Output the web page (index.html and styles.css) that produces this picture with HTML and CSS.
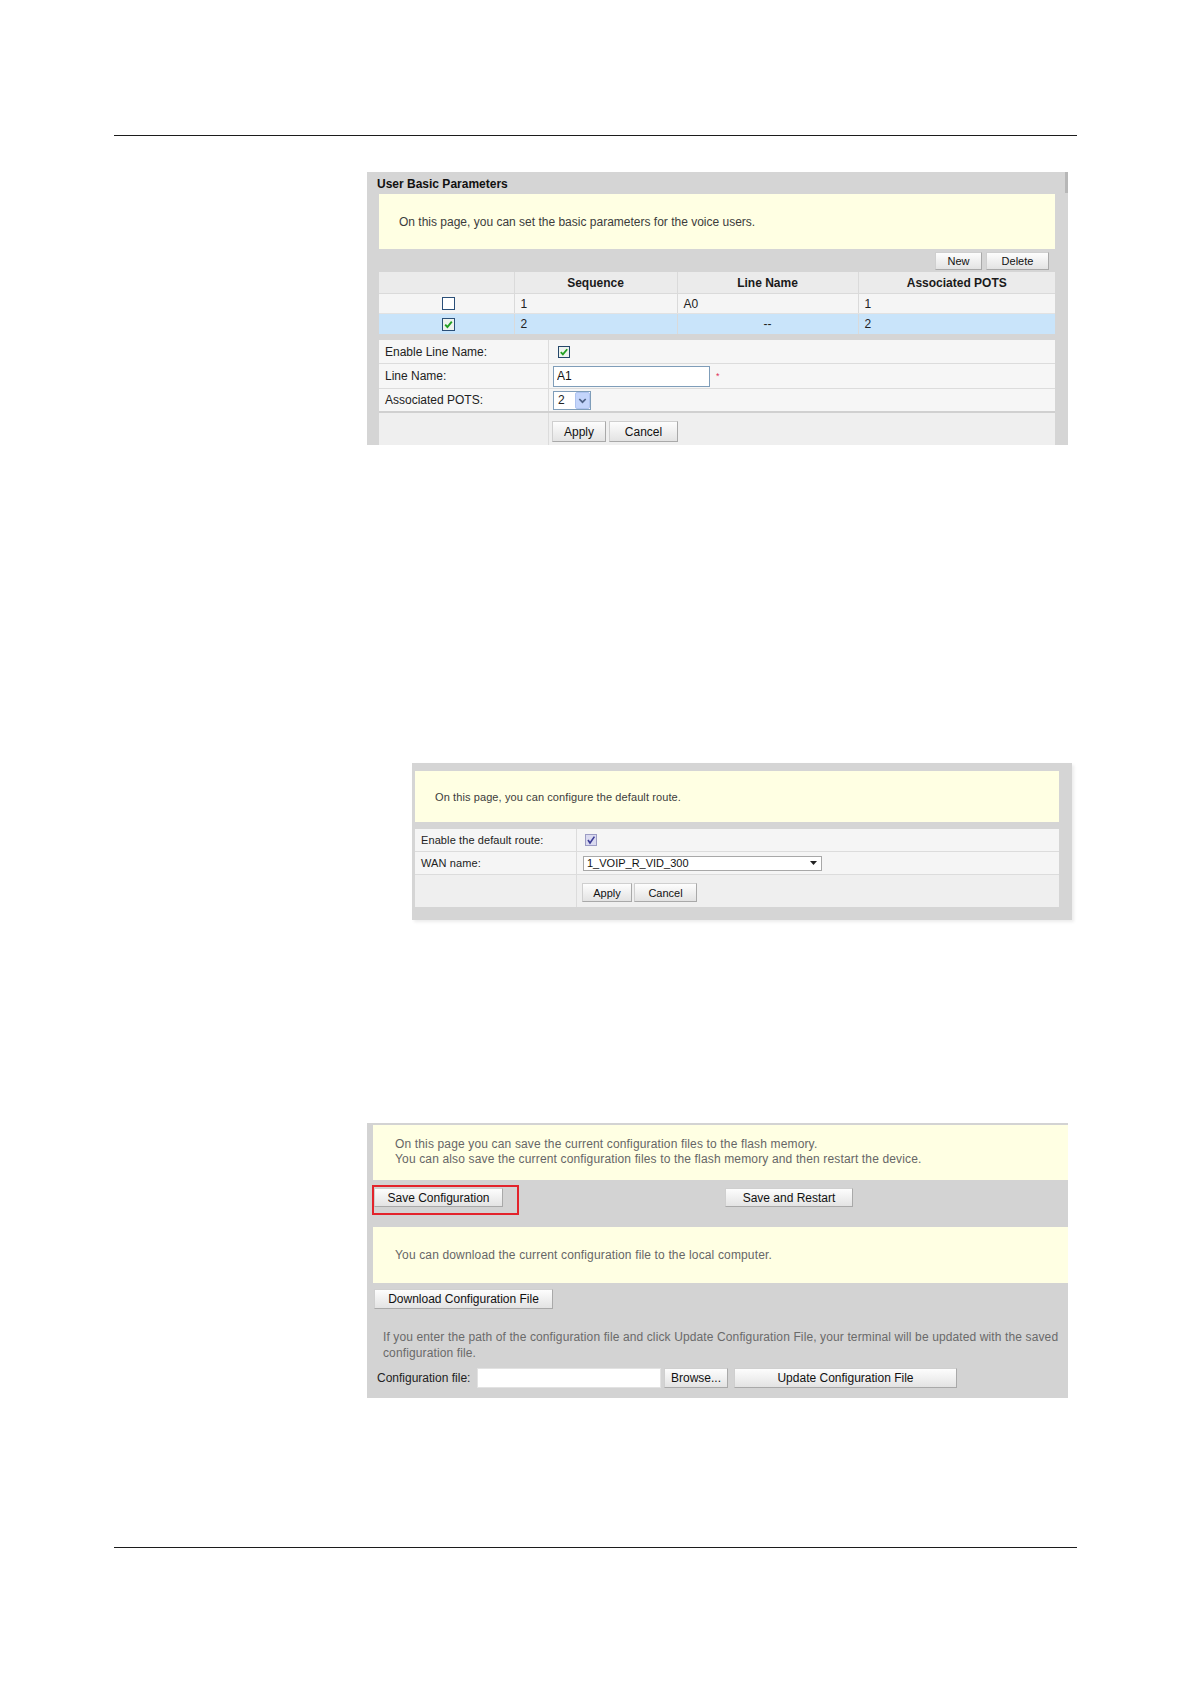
FILE: index.html
```
<!DOCTYPE html>
<html lang="en">
<head>
<meta charset="utf-8">
<title>Configuration pages</title>
<link rel="stylesheet" href="styles.css">
</head>
<body>
<div class="page">
  <div class="rule rule-top"></div>

  <section class="panel p1">
    <div class="p1-title">User Basic Parameters</div>
    <div class="note p1-note">On this page, you can set the basic parameters for the voice users.</div>
    <div class="p1-bar">
      <button class="btn btn-new">New</button>
      <button class="btn btn-del">Delete</button>
    </div>
    <table class="list">
      <colgroup><col class="c1"><col class="c2"><col class="c3"><col class="c4"></colgroup>
      <thead>
        <tr><th></th><th>Sequence</th><th>Line Name</th><th>Associated POTS</th></tr>
      </thead>
      <tbody>
        <tr>
          <td class="cb"><svg width="13" height="13" viewBox="0 0 13 13"><rect x="0.5" y="0.5" width="12" height="12" fill="#fff" stroke="#2a4f78"/></svg></td>
          <td>1</td><td>A0</td><td>1</td>
        </tr>
        <tr class="sel">
          <td class="cb"><svg width="13" height="13" viewBox="0 0 13 13"><rect x="0.5" y="0.5" width="12" height="12" fill="#eef3ee" stroke="#2a4f78"/><path d="M3.2 6.6 L5.4 9 L9.8 3.6" fill="none" stroke="#22a022" stroke-width="1.9"/></svg></td>
          <td>2</td><td class="center">--</td><td>2</td>
        </tr>
      </tbody>
    </table>
    <div class="form f1">
      <div class="frow">
        <div class="flabel">Enable Line Name:</div>
        <div class="fval"><svg class="chk1" width="12" height="12" viewBox="0 0 12 12"><rect x="0.5" y="0.5" width="11" height="11" fill="#eef3ee" stroke="#25476a"/><path d="M2.8 6.1 L4.9 8.4 L9.2 3.2" fill="none" stroke="#22a022" stroke-width="1.8"/></svg></div>
      </div>
      <div class="frow r-name">
        <div class="flabel">Line Name:</div>
        <div class="fval"><input class="txt" type="text" value="A1"><span class="req">*</span></div>
      </div>
      <div class="frow r-pots">
        <div class="flabel">Associated POTS:</div>
        <div class="fval">
          <div class="xp-select"><span class="xp-val">2</span><svg class="xp-arrow" width="15" height="17" viewBox="0 0 15 17"><rect x="0.5" y="0.5" width="14" height="16" rx="1.5" fill="#c4d5fb" stroke="#aec3ef"/><path d="M4.3 7 L7.5 10.2 L10.7 7" fill="none" stroke="#4d6185" stroke-width="1.7"/></svg></div>
        </div>
      </div>
      <div class="frow r-act">
        <div class="flabel"></div>
        <div class="fval"><button class="btn b1-apply">Apply</button><button class="btn b1-cancel">Cancel</button></div>
      </div>
    </div>
  </section>

  <section class="panel p2">
    <div class="note p2-note">On this page, you can configure the default route.</div>
    <div class="form f2">
      <div class="frow">
        <div class="flabel">Enable the default route:</div>
        <div class="fval"><svg class="chk2" width="12" height="12" viewBox="0 0 12 12"><rect x="0.5" y="0.5" width="11" height="11" fill="#dadaf0" stroke="#9c9cc4"/><path d="M3 6 L5 9 L9.4 2.6" fill="none" stroke="#3c3c96" stroke-width="1.6"/></svg></div>
      </div>
      <div class="frow">
        <div class="flabel">WAN name:</div>
        <div class="fval">
          <div class="wan-select"><span>1_VOIP_R_VID_300</span><svg width="7" height="4" viewBox="0 0 7 4"><path d="M0 0 H7 L3.5 4 Z" fill="#222"/></svg></div>
        </div>
      </div>
      <div class="frow r-act">
        <div class="flabel"></div>
        <div class="fval"><button class="btn b2-apply">Apply</button><button class="btn b2-cancel">Cancel</button></div>
      </div>
    </div>
  </section>

  <section class="panel p3">
    <div class="note p3-note1">On this page you can save the current configuration files to the flash memory.<br>You can also save the current configuration files to the flash memory and then restart the device.</div>
    <div class="p3-band">
      <div class="band-cell"><span class="hl"><button class="btn b-save">Save Configuration</button></span></div>
      <div class="band-cell cell-2"><button class="btn b-restart">Save and Restart</button></div>
    </div>
    <div class="note p3-note2">You can download the current configuration file to the local computer.</div>
    <button class="btn b-download">Download Configuration File</button>
    <div class="p3-hint">If you enter the path of the configuration file and click Update Configuration File, your terminal will be updated with the saved<br>configuration file.</div>
    <div class="p3-file">
      <span class="file-label">Configuration file:</span>
      <span class="file-input"></span>
      <button class="btn b-browse">Browse...</button>
      <button class="btn b-update">Update Configuration File</button>
    </div>
  </section>

  <div class="rule rule-bottom"></div>
</div>
</body>
</html>
```

FILE: styles.css
```
*, *::before, *::after { box-sizing: border-box; }

body {
  margin: 0;
  background: #fff;
  font-family: "Liberation Sans", Arial, sans-serif;
  color: #222;
}

.page {
  width: 1191px;
  padding: 0 114px 60px;
}

.rule { height: 1px; background: #1c1c1c; }
.rule-top { margin-top: 135px; }
.rule-bottom { margin-top: 149px; }

/* generic */
.btn {
  margin: 0;
  padding: 0;
  font-family: "Liberation Sans", Arial, sans-serif;
  font-size: 12px;
  color: #111;
  background: linear-gradient(#fdfdfd, #e3e3e3);
  border: 1px solid #cfcfcf;
  border-right-color: #a9a9a9;
  border-bottom-color: #a9a9a9;
  border-radius: 0;
  cursor: pointer;
}

.note {
  background: #ffffe3;
  display: flex;
  align-items: center;
}

.panel { position: relative; }

.frow {
  display: flex;
  border-bottom: 1px solid #dcdcdc;
  background: #f6f6f6;
}
.flabel {
  display: flex;
  align-items: center;
  border-right: 1px solid #dcdcdc;
}
.fval {
  flex: 1;
  display: flex;
  align-items: center;
}

/* ---------- panel 1 ---------- */
.p1 {
  margin: 36px 0 0 253px;
  width: 701px;
  height: 273px;
  background: #d5d5d5;
  padding: 0 13px 0 12px;
  overflow: hidden;
}
.p1::after {
  content: "";
  position: absolute;
  right: 0;
  top: 0;
  width: 3px;
  height: 21px;
  background: #b7b7b7;
}
.p1-title {
  height: 22px;
  margin-left: -2px;
  font-size: 12px;
  font-weight: bold;
  line-height: 24px;
  color: #111;
}
.p1-note {
  height: 55px;
  padding-left: 20px;
  font-size: 12px;
  color: #3c3c3c;
}
.p1-bar {
  height: 23px;
  display: flex;
  justify-content: flex-end;
  gap: 4px;
  padding: 3px 6px 0 0;
}
.btn-new { width: 47px; height: 18px; font-size: 11px; }
.btn-del { width: 63px; height: 18px; font-size: 11px; }

.list {
  width: 676px;
  border-collapse: collapse;
  table-layout: fixed;
  font-size: 12px;
  color: #222;
}
.list col.c1 { width: 135px; }
.list col.c2 { width: 163px; }
.list col.c3 { width: 181px; }
.list col.c4 { width: 197px; }
.list th {
  height: 21px;
  padding: 1px 0 0;
  background: #ebebeb;
  font-weight: bold;
  text-align: center;
  color: #1a1a1a;
  border-left: 1px solid #dadada;
  border-bottom: 1px solid #dadada;
}
.list td {
  height: 20px;
  padding: 1px 0 0 6px;
  background: #f5f5f5;
  border-left: 1px solid #dadada;
  border-bottom: 1px solid #e2e2e2;
}
.list th:first-child,
.list td:first-child { border-left: none; }
.list tr.sel td {
  height: 21px;
  background: #c9e4fa;
  border-bottom: none;
}
.list td.cb { padding: 0 0 0 4px; text-align: center; }
.list td.cb svg { display: inline-block; vertical-align: middle; }
.list td.center { text-align: center; padding: 1px 0 0; }

.f1 { margin-top: 6px; }
.f1 .frow { height: 24px; }
.f1 .r-name { height: 25px; }
.f1 .r-pots { border-bottom: 2px solid #d0d0d0; }
.f1 .flabel {
  width: 170px;
  padding-left: 6px;
  font-size: 12px;
  color: #222;
}
.f1 .fval { padding-left: 4px; }
.chk1 { margin-left: 5px; }
.txt {
  width: 157px;
  height: 21px;
  margin: 0;
  padding: 0 3px;
  border: 1px solid #7f9db9;
  font-family: "Liberation Sans", Arial, sans-serif;
  font-size: 12px;
  color: #111;
  background: #fff;
  outline: none;
}
.req {
  color: #e0305a;
  font-size: 9px;
  margin-left: 6px;
  align-self: flex-start;
  margin-top: 7px;
}
.xp-select {
  width: 38px;
  height: 19px;
  border: 1px solid #7f9db9;
  background: #fff;
  display: flex;
  align-items: center;
  justify-content: space-between;
  font-size: 12px;
  padding-left: 4px;
}
.xp-arrow { display: block; margin-right: 0; }
.f1 .r-act {
  height: 32px;
  background: #efefef;
  border-bottom: none;
}
.f1 .r-act .fval { align-items: flex-start; padding: 8px 0 0 3px; gap: 3px; }
.b1-apply { width: 54px; height: 21px; }
.b1-cancel { width: 69px; height: 21px; }

/* ---------- panel 2 ---------- */
.p2 {
  margin: 318px 0 0 298px;
  width: 660px;
  height: 157px;
  background: #d5d5d5;
  padding: 8px 13px 13px 3px;
  box-shadow: 2px 2px 3px rgba(0, 0, 0, 0.08);
}
.p2-note {
  height: 51px;
  padding-left: 20px;
  font-size: 11px;
  letter-spacing: 0.1px;
  color: #3c3c3c;
}
.f2 { margin-top: 7px; }
.f2 .frow { height: 23px; background: #f5f5f5; }
.f2 .flabel {
  width: 162px;
  padding-left: 6px;
  font-size: 11px;
  letter-spacing: 0.1px;
  color: #222;
}
.f2 .fval { padding-left: 6px; }
.chk2 { margin-left: 2px; }
.wan-select {
  width: 239px;
  height: 15px;
  border: 1px solid #a8a8a8;
  background: #fff;
  display: flex;
  align-items: center;
  justify-content: space-between;
  padding: 0 4px 0 3px;
  font-size: 11px;
  color: #111;
}
.f2 .r-act {
  height: 32px;
  background: #efefef;
  border-bottom: none;
}
.f2 .r-act .fval { align-items: flex-start; padding: 8px 0 0 5px; gap: 2px; }
.b2-apply { width: 50px; height: 19px; font-size: 11px; }
.b2-cancel { width: 63px; height: 19px; font-size: 11px; }

/* ---------- panel 3 ---------- */
.p3 {
  margin: 203px 0 0 253px;
  width: 701px;
  height: 275px;
  background: #d3d3d3;
  padding: 2px 0 0 6px;
}
.p3-note1 {
  display: block;
  height: 55px;
  padding: 12px 0 0 22px;
  font-size: 12px;
  line-height: 15px;
  letter-spacing: 0.15px;
  color: #666;
}
.p3-band {
  height: 47px;
  display: grid;
  grid-template-columns: 347px 1fr;
  padding-top: 8px;
}
.band-cell { display: flex; align-items: flex-start; padding-left: 1px; }
.band-cell.cell-2 { padding-left: 5px; }
.hl { position: relative; display: inline-block; }
.hl::after {
  content: "";
  position: absolute;
  left: -2px;
  top: -3px;
  width: 147px;
  height: 30px;
  border: 2px solid #e3232b;
  pointer-events: none;
}
.b-save { display: block; width: 129px; height: 19px; }
.b-restart { width: 128px; height: 19px; }
.p3-note2 {
  height: 56px;
  padding-left: 22px;
  font-size: 12px;
  letter-spacing: 0.15px;
  color: #666;
}
.b-download {
  display: block;
  margin: 6px 0 0 1px;
  width: 179px;
  height: 20px;
}
.p3-hint {
  margin-top: 20px;
  padding-left: 10px;
  font-size: 12px;
  line-height: 16px;
  letter-spacing: 0.12px;
  color: #6a6a6a;
  white-space: nowrap;
}
.p3-file {
  display: flex;
  align-items: center;
  height: 20px;
  margin-top: 7px;
  padding-left: 4px;
}
.file-label {
  width: 100px;
  font-size: 12px;
  color: #222;
}
.file-input {
  width: 184px;
  height: 20px;
  background: #fff;
  border: 1px solid #e2e2e2;
}
.b-browse { width: 64px; height: 20px; margin-left: 3px; }
.b-update { width: 223px; height: 20px; margin-left: 6px; }
```
